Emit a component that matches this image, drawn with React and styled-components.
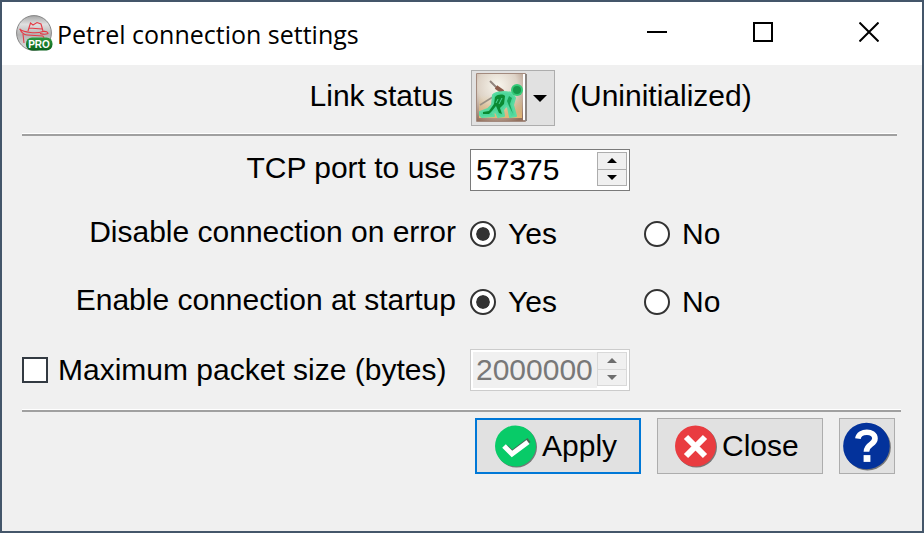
import React, { useState } from "react";
import styled, { createGlobalStyle, css } from "styled-components";

const GlobalStyle = createGlobalStyle`
  *, *::before, *::after { box-sizing: border-box; }
  html, body, #root { height: 100%; }
  body { margin: 0; }
  button, input { font: inherit; color: inherit; }
`;

const Window = styled.main`
  display: flex;
  flex-direction: column;
  min-height: 100%;
  border: 2px solid #44566a;
  background: #f0f0f0;
  color: #000;
  font: 30px/36px "Liberation Sans", Arial, sans-serif;
`;

const TitleBar = styled.header`
  display: flex;
  align-items: center;
  height: 63px;
  padding-left: 14px;
  background: #fff;
`;

const Title = styled.h1`
  flex: 1;
  margin: 0;
  padding-left: 4px;
  font: 400 25px/32px "Open Sans", "Noto Sans", sans-serif;
  white-space: nowrap;
`;

const CaptionButton = styled.button`
  display: flex;
  align-self: flex-start;
  align-items: center;
  justify-content: center;
  width: 106px;
  height: 60px;
  padding: 0;
  border: 0;
  background: transparent;
`;

const Body = styled.form`
  display: flex;
  flex-direction: column;
  padding: 0 18px 0 20px;
`;

const Row = styled.div`
  display: grid;
  grid-template-columns: 1fr 1fr;
  column-gap: 14px;
  align-items: center;
  min-height: ${(p) => p.$height || 68}px;
`;

const RowLabel = styled.label`
  justify-self: end;
  padding-bottom: 4px;
  padding-right: ${(p) => (p.$inset ? 3 : 0)}px;
  white-space: nowrap;
`;

const Separator = styled.hr`
  width: auto;
  height: 3px;
  margin: ${(p) => p.$before}px ${(p) => p.$end}px 4px 0;
  border: 0;
  border-top: 1px solid #fff;
  background: #a0a0a0;
`;

const StatusGroup = styled.div`
  display: flex;
  align-items: center;
  gap: 15px;
`;

const StatusText = styled.output`
  padding-bottom: 4px;
`;

const buttonFace = css`
  display: flex;
  align-items: center;
  height: 56px;
  border: 1px solid #adadad;
  background: #e1e1e1;
`;

const LinkMenuButton = styled.button`
  ${buttonFace}
  gap: 6px;
  width: 84px;
  margin-left: 1px;
  padding: 0 4px;
`;

const SpinBox = styled.div`
  display: flex;
  width: 160px;
  height: 42px;
  padding: 2px;
  border: 1px solid ${(p) => (p.$disabled ? "#ccc" : "#7a7a7a")};
  background: #fff;
`;

const SpinInput = styled.input`
  flex: 1;
  min-width: 0;
  height: 36px;
  padding: 0 0 0 3px;
  border: 0;
  outline: 0;
  background: #fff;
  &:disabled {
    background: #f0f0f0;
    color: #787878;
  }
`;

const SpinButtons = styled.div`
  display: flex;
  flex-direction: column;
  width: 30px;
  height: 34px;
`;

const SpinButton = styled.button`
  display: flex;
  align-items: center;
  justify-content: center;
  flex: 1;
  padding: 0;
  border: 1px solid #adadad;
  background: #f0f0f0;
  & + & { border-top: 0; }
  &:disabled {
    border-color: #d9d9d9;
    color: #6d6d6d;
  }
`;

const Choices = styled.div`
  display: grid;
  grid-template-columns: 174px auto;
  justify-content: start;
`;

const Choice = styled.label`
  display: flex;
  align-items: center;
  gap: 12px;
`;

const Radio = styled.input`
  appearance: none;
  width: 26px;
  height: 26px;
  margin: 0;
  border: 2px solid #333;
  border-radius: 50%;
  background: #fff;
  &:checked {
    padding: 4px;
    background: #333 content-box;
    box-shadow: inset 0 0 0 4px #fff;
  }
`;

const PacketLabel = styled.label`
  display: flex;
  align-items: center;
  gap: 10px;
  white-space: nowrap;
`;

const CheckBox = styled.input`
  appearance: none;
  flex: none;
  width: 26px;
  height: 26px;
  margin: 0;
  border: 2px solid #333a42;
  background: #fff;
  &:checked {
    box-shadow: inset 0 0 0 4px #fff;
    background: #333;
  }
`;

const Actions = styled.footer`
  display: flex;
  justify-content: flex-end;
  gap: 16px;
  padding: 2px 9px 0 0;
`;

const ActionButton = styled.button`
  ${buttonFace}
  gap: 4px;
  width: 166px;
  padding: 0 0 0 ${(p) => (p.$primary ? 17 : 16)}px;
  ${(p) => p.$primary && css`border: 2px solid #0078d7;`}
`;

const HelpButton = styled.button`
  ${buttonFace}
  justify-content: center;
  width: 56px;
  padding: 0;
`;

const BadgeText = styled.text`
  font: 700 10px "Liberation Sans", Arial, sans-serif;
`;

function AppIcon() {
  return (
    <svg width="37" height="37" viewBox="0 0 37 37" aria-hidden="true">
      <defs>
        <linearGradient id="silver" x1="0" y1="0" x2="0" y2="1">
          <stop offset="0" stopColor="#a5a5a5" />
          <stop offset=".25" stopColor="#e0e0e0" />
          <stop offset=".55" stopColor="#b5b5b5" />
          <stop offset="1" stopColor="#e2e2e2" />
        </linearGradient>
        <linearGradient id="badge" x1="0" y1="0" x2="0" y2="1">
          <stop offset="0" stopColor="#2e9b3f" />
          <stop offset="1" stopColor="#07601a" />
        </linearGradient>
      </defs>
      <circle cx="18" cy="18" r="17.4" fill="url(#silver)" stroke="#858585" />
      <g fill="none" stroke="#e53a45" strokeWidth="1.1">
        <path d="M3.500 14C8 17.500 20 19 27 16.500C30 16 32 17 32 18.500C29 20 26 19 24 18.500M4 14C5 17 8 20 11 20L27 21" />
        <path d="M12 16L14.500 8L17 10L21 7.500L25 9L27 16M13 13L26 14M7 19L8 28M27 21L28 23" />
      </g>
      <rect x="10" y="22.500" width="26.500" height="13" rx="6" fill="url(#badge)" />
      <BadgeText x="23" y="32.500" textAnchor="middle" fill="#fff">PRO</BadgeText>
    </svg>
  );
}

function LinkIcon() {
  return (
    <svg width="51" height="50" viewBox="0 0 51 50" aria-hidden="true">
      <defs>
        <radialGradient id="scene" cx=".45" cy=".25" r=".85">
          <stop offset="0" stopColor="#f8f6ee" />
          <stop offset=".5" stopColor="#ded3c7" />
          <stop offset="1" stopColor="#94715f" />
        </radialGradient>
        <linearGradient id="ground" x1="0" y1="0" x2="0" y2="1">
          <stop offset="0" stopColor="#f0d79c" stopOpacity="0" />
          <stop offset="1" stopColor="#e3b675" />
        </linearGradient>
      </defs>
      <rect width="50" height="49" rx="1" fill="#a38a7e" />
      <rect x="1" y="1" width="46" height="47" fill="url(#scene)" />
      <rect x="3" y="22" width="43" height="23" fill="url(#ground)" />
      <path d="M4 32L20 22" stroke="#999084" strokeWidth="1.500" />
      <path d="M14 8L21 15" stroke="#91847d" strokeWidth="2" />
      <path d="M20 14L27 19" stroke="#8c5c4b" strokeWidth="4" />
      <path
        d="M17 22C20 18 31 19 36 20L39 25L37 32L40 43L34 44L32 34L30 33L27 37L28 43L22 44L20 39L17 40L18 43L6 44L4 42V39L12 36L16 32Z"
        fill="#4dd69a"
        stroke="#5adba2"
        strokeWidth="2"
        strokeLinejoin="round"
      />
      <path
        d="M19 24C22 21 27 21 29 23L28 31L24 35L26 41L23 40L20 33L16 38L13 41H7V39L13 38L18 31Z"
        fill="#0a8a32"
      />
      <path d="M33 23L36 25L34 31L37 41L33 33L31 28Z" fill="#18a356" />
      <path d="M22 26L20 30M26 25L23 31" stroke="#4dd69a" />
      <circle cx="41" cy="17" r="6" fill="#36c978" />
      <circle cx="41" cy="17" r="4" fill="#16994b" />
      <rect x="47" y="1" width="2" height="46" fill="#fff" />
      <path d="M50 1V48" stroke="#8b8581" strokeWidth="2" />
    </svg>
  );
}

function Arrow({ up, width = 10 }) {
  return (
    <svg width={width} height={width / 2} viewBox="0 0 10 5" aria-hidden="true">
      <path d={up ? "M0 5L5 0L10 5Z" : "M0 0L5 5L10 0Z"} fill="currentColor" />
    </svg>
  );
}

function RoundIcon({ size = 44, color, children }) {
  return (
    <svg width={size} height={size} viewBox="0 0 44 44" aria-hidden="true">
      <circle cx="22.500" cy="23" r="20.500" fill="#777" />
      <circle cx="21.500" cy="22" r="20.500" fill={color} />
      {children}
    </svg>
  );
}

function CaptionIcon({ d }) {
  return (
    <svg width="20" height="20" viewBox="0 0 20 20" aria-hidden="true">
      <path d={d} fill="none" stroke="#000" strokeWidth="2" />
    </svg>
  );
}

function NumberField({ id, label, value, onChange, disabled }) {
  const step = (n) => onChange(String((Number(value) || 0) + n));
  return (
    <SpinBox $disabled={disabled}>
      <SpinInput
        id={id}
        aria-label={label}
        inputMode="numeric"
        value={value}
        disabled={disabled}
        onChange={(e) => onChange(e.target.value)}
      />
      <SpinButtons>
        <SpinButton type="button" aria-label="Increase" disabled={disabled} onClick={() => step(1)}>
          <Arrow up />
        </SpinButton>
        <SpinButton type="button" aria-label="Decrease" disabled={disabled} onClick={() => step(-1)}>
          <Arrow />
        </SpinButton>
      </SpinButtons>
    </SpinBox>
  );
}

function YesNoRow({ name, label }) {
  const [value, setValue] = useState("Yes");
  return (
    <Row>
      <RowLabel as="span" id={`${name}-label`}>{label}</RowLabel>
      <Choices role="radiogroup" aria-labelledby={`${name}-label`}>
        {["Yes", "No"].map((option) => (
          <Choice key={option}>
            <Radio
              type="radio"
              name={name}
              checked={value === option}
              onChange={() => setValue(option)}
            />
            {option}
          </Choice>
        ))}
      </Choices>
    </Row>
  );
}

export default function App() {
  const [port, setPort] = useState("57375");
  const [packetSize, setPacketSize] = useState("2000000");
  const [limited, setLimited] = useState(false);

  return (
    <Window>
      <GlobalStyle />
      <TitleBar>
        <AppIcon />
        <Title>Petrel connection settings</Title>
        <CaptionButton type="button" aria-label="Minimize">
          <CaptionIcon d="M0 10H20" />
        </CaptionButton>
        <CaptionButton type="button" aria-label="Maximize">
          <CaptionIcon d="M1 1H19V19H1Z" />
        </CaptionButton>
        <CaptionButton type="button" aria-label="Close window">
          <CaptionIcon d="M.5 .5L19.500 19.500M19.500 .5L.5 19.500" />
        </CaptionButton>
      </TitleBar>

      <Body onSubmit={(e) => e.preventDefault()}>
        <Row $height={66}>
          <RowLabel htmlFor="link-status" $inset>Link status</RowLabel>
          <StatusGroup>
            <LinkMenuButton type="button" id="link-status" aria-haspopup="menu">
              <LinkIcon />
              <Arrow width={14} />
            </LinkMenuButton>
            <StatusText htmlFor="link-status">(Uninitialized)</StatusText>
          </StatusGroup>
        </Row>
        <Separator $before={2} $end={7} />
        <Row $height={60}>
          <RowLabel htmlFor="port">TCP port to use</RowLabel>
          <NumberField id="port" value={port} onChange={setPort} />
        </Row>
        <YesNoRow name="disable-on-error" label="Disable connection on error" />
        <YesNoRow name="enable-at-startup" label="Enable connection at startup" />
        <Row>
          <PacketLabel>
            <CheckBox
              type="checkbox"
              checked={limited}
              onChange={(e) => setLimited(e.target.checked)}
            />
            Maximum packet size (bytes)
          </PacketLabel>
          <NumberField
            id="packet-size"
            label="Maximum packet size in bytes"
            value={packetSize}
            onChange={setPacketSize}
            disabled={!limited}
          />
        </Row>
        <Separator $before={5} $end={3} />
        <Actions>
          <ActionButton type="submit" $primary>
            <RoundIcon color="#08cb68">
              <path d="M12 23L18 29L35 16" fill="none" stroke="#4c6455" strokeWidth="5" />
              <path d="M10 22L18 30L34 18" fill="none" stroke="#fff" strokeWidth="5" />
            </RoundIcon>
            Apply
          </ActionButton>
          <ActionButton type="button">
            <RoundIcon color="#e93c40">
              <path d="M12 13L31 32M31 13L12 32" stroke="#fff" strokeWidth="6" />
            </RoundIcon>
            Close
          </ActionButton>
          <HelpButton type="button" aria-label="Help">
            <RoundIcon size={50} color="#03329b">
              <path d="M14 15.500C15 8 29 8 29 15.500C29 21 21.500 20 21.500 27" fill="none" stroke="#fff" strokeWidth="5" />
              <path d="M19 30H25V36H19Z" fill="#fff" />
            </RoundIcon>
          </HelpButton>
        </Actions>
      </Body>
    </Window>
  );
}
